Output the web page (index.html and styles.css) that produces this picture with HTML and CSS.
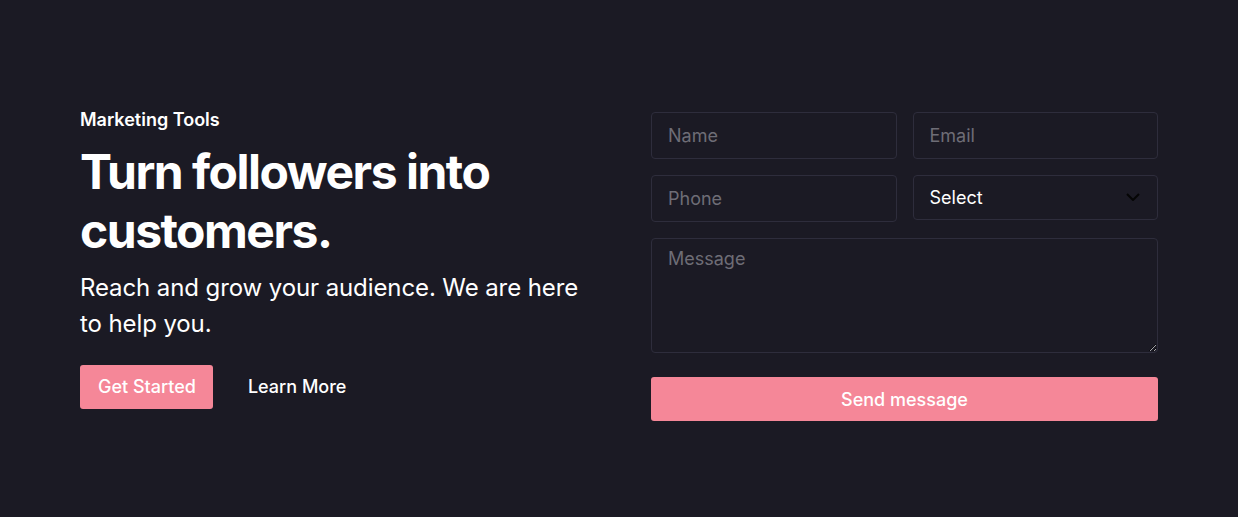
FILE: index.html
```html
<!DOCTYPE html>
<html lang="en">
<head>
<meta charset="utf-8">
<title>Marketing Tools</title>
<link rel="stylesheet" href="styles.css">
</head>
<body>
<section class="hero">
  <div class="intro">
    <p class="eyebrow">Marketing Tools</p>
    <h1 class="title">Turn followers into customers.</h1>
    <p class="lead">Reach and grow your audience. We are here to help you.</p>
    <div class="actions">
      <a class="btn btn-primary" href="#">Get Started</a>
      <a class="btn btn-link" href="#">Learn More</a>
    </div>
  </div>
  <form class="form">
    <input class="field" type="text" placeholder="Name">
    <input class="field" type="email" placeholder="Email">
    <input class="field" type="tel" placeholder="Phone">
    <div class="select-wrap">
      <select class="field select">
        <option>Select</option>
      </select>
      <svg class="chev" width="14" height="8" viewBox="0 0 14 8" aria-hidden="true"><path d="M1 1l6 6 6-6" fill="none" stroke="#050505" stroke-width="2"/></svg>
    </div>
    <textarea class="field message" placeholder="Message"></textarea>
    <button class="send" type="button">Send message</button>
  </form>
</section>
</body>
</html>
```
FILE: styles.css
```css
* { box-sizing: border-box; }
html, body { margin: 0; }
body {
  background: #1b1a24;
  color: #ffffff;
  font-family: Inter, "Noto Sans", sans-serif;
  width: 1238px;
  height: 517px;
  overflow: hidden;
}
.hero {
  display: grid;
  grid-template-columns: 507px 507px;
  column-gap: 64px;
  padding: 112px 80px 0 80px;
  align-items: start;
}
.eyebrow {
  margin: -4px 0 0 0;
  font-size: 18px;
  font-weight: 600;
  line-height: 24px;
}
.title {
  margin: 10px 0 0 0;
  font-size: 48px;
  font-weight: 700;
  line-height: 59px;
  letter-spacing: -1.5px;
}
.lead {
  margin: 10px 0 0 0;
  font-size: 24px;
  line-height: 36px;
  font-weight: 400;
  letter-spacing: -0.1px;
}
.actions {
  display: flex;
  align-items: center;
  gap: 17px;
  margin-top: 23px;
}
.btn {
  display: inline-flex;
  align-items: center;
  height: 44px;
  padding: 0 17px 0 18px;
  font-size: 18px;
  line-height: 24px;
  font-weight: 500;
  color: #ffffff;
  text-decoration: none;
  border-radius: 3px;
}
.btn-primary { background: #f58798; }
.form {
  display: grid;
  grid-template-columns: 1fr 1fr;
  column-gap: 16px;
  row-gap: 16px;
}
.field {
  width: 100%;
  height: 47px;
  background: #1b1a24;
  border: 1px solid #2e2d3c;
  border-radius: 4px;
  color: #ffffff;
  font-family: Inter, "Noto Sans", sans-serif;
  font-size: 18px;
  padding: 0 16px;
  outline: none;
  margin: 0;
}
.field::placeholder { color: #6e6d76; }
.select-wrap { position: relative; height: 45px; }
.select {
  appearance: none;
  -webkit-appearance: none;
  height: 45px;
}
.chev {
  position: absolute;
  right: 18px;
  top: 18px;
  pointer-events: none;
}
.message {
  grid-column: 1 / 3;
  height: 115px;
  padding: 9px 16px;
  resize: vertical;
}
.send {
  grid-column: 1 / 3;
  height: 44px;
  margin-top: 8px;
  background: #f58798;
  border: none;
  border-radius: 3px;
  color: #ffffff;
  font-family: Inter, "Noto Sans", sans-serif;
  font-size: 18px;
  font-weight: 500;
}
```
